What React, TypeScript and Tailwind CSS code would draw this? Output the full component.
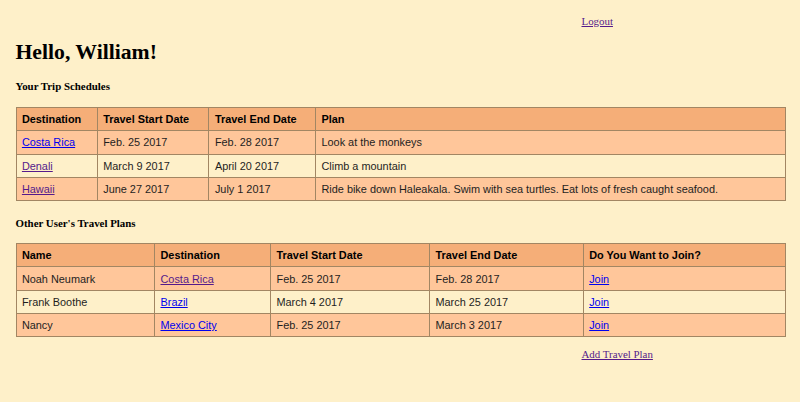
import React from "react";

const BLUE = "text-[#0000ee] underline";
const VISITED = "text-[#551a8b] underline";

type Cell = { text: string; link?: "blue" | "visited" };

function Table({ widths, head, rows }: { widths: string[]; head: string[]; rows: Cell[][] }) {
  return (
    <table className="w-[770px] table-fixed border-collapse border border-[#a28663] font-['Liberation_Sans',Arial,sans-serif] text-[10.9px] leading-[12px]">
      <colgroup>
        {widths.map((w, i) => (
          <col key={i} className={w} />
        ))}
      </colgroup>
      <thead>
        <tr className="bg-[#f5ae78]">
          {head.map((h, i) => (
            <th key={i} className="h-[23.3px] border border-[#a28663] px-[5.4px] py-0 text-left align-middle font-bold text-black">
              {h}
            </th>
          ))}
        </tr>
      </thead>
      <tbody>
        {rows.map((r, ri) => (
          <tr key={ri} className={ri % 2 === 0 ? "bg-[#ffc69a]" : "bg-[#fef0c9]"}>
            {r.map((c, ci) => (
              <td key={ci} className="h-[23.3px] border border-[#a28663] px-[5.4px] py-0 align-middle text-[#1e1e1e]">
                {c.link ? (
                  <a href="#" className={c.link === "blue" ? BLUE : VISITED}>
                    {c.text}
                  </a>
                ) : (
                  c.text
                )}
              </td>
            ))}
          </tr>
        ))}
      </tbody>
    </table>
  );
}

export default function App() {
  return (
    <div className="h-[402px] w-[800px] overflow-hidden bg-[#fef0c9] font-['Liberation_Serif','Times_New_Roman',serif] text-black">
      <div className="pl-[15.5px]">
        <div className="flex pt-[15px]">
          <div className="w-[566px]" />
          <a href="#" className={`${VISITED} text-[10.9px] leading-[12px]`}>Logout</a>
        </div>
        <h1 className="mt-[13px] text-[21.7px] leading-[25px] font-bold">Hello, William!</h1>
        <h4 className="mt-[15px] text-[10.9px] leading-[12px] font-bold">Your Trip Schedules</h4>
        <div className="mt-[15px]">
          <Table
            widths={["w-[81.3px]", "w-[111.7px]", "w-[106.6px]", "w-[470.4px]"]}
            head={["Destination", "Travel Start Date", "Travel End Date", "Plan"]}
            rows={[
              [{ text: "Costa Rica", link: "blue" }, { text: "Feb. 25 2017" }, { text: "Feb. 28 2017" }, { text: "Look at the monkeys" }],
              [{ text: "Denali", link: "visited" }, { text: "March 9 2017" }, { text: "April 20 2017" }, { text: "Climb a mountain" }],
              [
                { text: "Hawaii", link: "visited" },
                { text: "June 27 2017" },
                { text: "July 1 2017" },
                { text: "Ride bike down Haleakala. Swim with sea turtles. Eat lots of fresh caught seafood." },
              ],
            ]}
          />
        </div>
        <h4 className="mt-[15.5px] text-[10.9px] leading-[12px] font-bold">Other User's Travel Plans</h4>
        <div className="mt-[14.5px]">
          <Table
            widths={["w-[138.6px]", "w-[116px]", "w-[159px]", "w-[153.7px]", "w-[202.7px]"]}
            head={["Name", "Destination", "Travel Start Date", "Travel End Date", "Do You Want to Join?"]}
            rows={[
              [{ text: "Noah Neumark" }, { text: "Costa Rica", link: "visited" }, { text: "Feb. 25 2017" }, { text: "Feb. 28 2017" }, { text: "Join", link: "blue" }],
              [{ text: "Frank Boothe" }, { text: "Brazil", link: "blue" }, { text: "March 4 2017" }, { text: "March 25 2017" }, { text: "Join", link: "blue" }],
              [{ text: "Nancy" }, { text: "Mexico City", link: "blue" }, { text: "Feb. 25 2017" }, { text: "March 3 2017" }, { text: "Join", link: "blue" }],
            ]}
          />
        </div>
        <div className="mt-[10.5px] flex">
          <div className="w-[566px]" />
          <a href="#" className={`${VISITED} text-[10.9px] leading-[12px]`}>Add Travel Plan</a>
        </div>
      </div>
    </div>
  );
}
